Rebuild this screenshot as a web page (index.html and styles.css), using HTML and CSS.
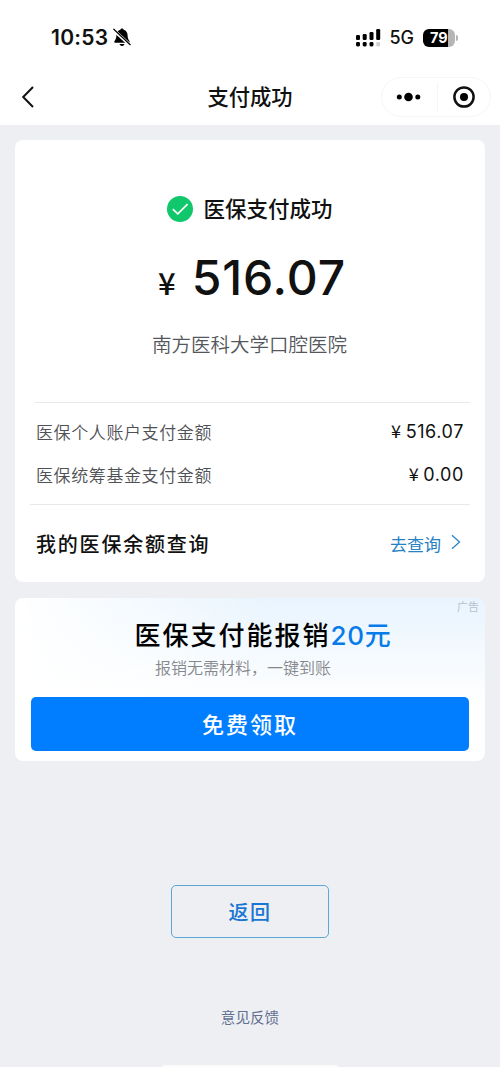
FILE: index.html
```html
<!DOCTYPE html>
<html lang="zh-CN">
<head>
<meta charset="utf-8">
<title>支付成功</title>
<link rel="stylesheet" href="styles.css">
</head>
<body>
<div class="screen">
  <header class="status">
    <div class="clock"><span class="time">10:53</span>
      <svg width="18" height="19" viewBox="0 0 18 19"><path d="M9 .6c1 0 1.5.6 1.6 1.2 2.8.8 4 3 4 5.6 0 3.8 2.2 5.200 2.200 6.700 0 .5-.4.7-1 .7H2.200c-.6 0-1-.2-1-.7 0-1.500 2.200-2.900 2.200-6.700 0-2.600 1.200-4.800 4-5.600C7.500 1.200 8 .6 9 .6z"/><path d="M6.500 16h5c-.3 1.200-1.300 1.900-2.500 1.900S6.800 17.200 6.500 16z"/><path d="M0 1.500l17 15.500" stroke="#fff" stroke-width="3.200"/><path d="M.8 1.200l16.400 15.500" stroke="#000" stroke-width="1.200" stroke-linecap="round"/></svg>
    </div>
    <div class="signals">
      <svg class="bars" width="26" height="18" viewBox="0 0 26 18"><rect x="1" y="6" width="4" height="5" rx="1.300"/><rect x="7.700" y="5" width="4" height="6" rx="1.300"/><rect x="14.500" y="3" width="4" height="8" rx="1.300"/><rect x="21.200" y="0" width="4" height="11" rx="1.300"/><rect x="1" y="13" width="4" height="4.500" rx="1.400"/><rect x="7.700" y="13" width="4" height="4.500" rx="1.400"/><rect x="14.500" y="13" width="4" height="4.500" rx="1.400"/><rect x="21.200" y="13" width="4" height="4.500" rx="1.400" fill="#d2d2d2"/></svg>
      <span class="network">5G</span>
      <span class="battery">79</span><span class="battery-tip"></span>
    </div>
  </header>
  <nav class="nav">
    <svg class="back" width="14" height="24" viewBox="0 0 14 24"><path d="M12 2L2.200 12 12 22" fill="none" stroke="#111" stroke-width="2"/></svg>
    <h1 class="nav-title">支付成功</h1>
    <div class="capsule">
      <svg width="26" height="12" viewBox="0 0 26 12"><circle cx="3.300" cy="6" r="2.500"/><circle cx="12.500" cy="6" r="4.300"/><circle cx="21.800" cy="6" r="2.500"/></svg>
      <i class="capsule-line"></i>
      <svg width="24" height="24" viewBox="0 0 24 24"><circle cx="12" cy="12" r="9.600" fill="none" stroke="#111" stroke-width="2.500"/><circle cx="12" cy="12" r="4"/></svg>
    </div>
  </nav>
  <main class="content">
    <section class="card receipt">
      <div class="result"><svg width="26" height="26" viewBox="0 0 26 26"><circle cx="13" cy="13" r="13" fill="#10c76b"/><path d="M5.800 13.200l5 4.700 9.800-9.800" fill="none" stroke="#fff" stroke-width="1.700"/></svg><span>医保支付成功</span></div>
      <div class="amount"><span class="yen">¥</span><span class="sum">516.07</span></div>
      <div class="hospital">南方医科大学口腔医院</div>
      <div class="details">
        <div class="row"><span>医保个人账户支付金额</span><span class="value"><small>¥</small>516.07</span></div>
        <div class="row"><span>医保统筹基金支付金额</span><span class="value"><small>¥</small>0.00</span></div>
      </div>
      <div class="balance">
        <span class="balance-title">我的医保余额查询</span>
        <a class="query">去查询<svg width="10" height="16" viewBox="0 0 10 16"><path d="M1 1.200L8.500 8 1 14.800" fill="none" stroke="#3189c6" stroke-width="1.400"/></svg></a>
      </div>
    </section>
    <section class="card ad">
      <span class="ad-tag">广告</span>
      <h2 class="ad-title">医保支付能报销<b>20元</b></h2>
      <p class="ad-text">报销无需材料，一键到账</p>
      <button class="claim">免费领取</button>
    </section>
    <button class="return">返回</button>
    <a class="feedback">意见反馈</a>
    <div class="home-bar"></div>
  </main>
</div>
</body>
</html>
```
FILE: styles.css
```css
* { box-sizing: border-box; }
body { margin: 0; background: #fff; color: #111; font-family: Inter, "Noto Sans CJK SC", sans-serif; }
svg { display: block; flex: none; }
h1, h2, p { margin: 0; font-weight: 500; }
button { font-family: inherit; display: block; padding: 0; }
.screen { width: 500px; height: 1067px; display: flex; flex-direction: column; }
.status { height: 70px; padding: 5px 42px 0 51px; display: flex; align-items: center; justify-content: space-between; }
.clock, .signals { display: flex; align-items: center; }
.clock { gap: 4px; }
.time { font-size: 21px; font-weight: 600; line-height: 26px; letter-spacing: .3px; }
.network { margin-left: 8px; font-size: 18px; font-weight: 500; line-height: 22px; }
.battery { margin-left: 9px; width: 32px; height: 18px; padding-left: 7px; border-radius: 6px; background: linear-gradient(90deg, #000 79%, #b5b5b5 79%); color: #fff; font-size: 14.500px; font-weight: 700; line-height: 18px; }
.battery-tip { width: 2px; height: 6px; margin-left: 1px; border-radius: 0 2px 2px 0; background: #b5b5b5; }
.nav { height: 55px; padding: 0 9px 2px 21px; display: grid; grid-template-columns: 110px 1fr 110px; align-items: center; }
.nav-title { text-align: center; margin-left: -12px; font-size: 21.300px; line-height: 30px; }
.capsule { width: 110px; height: 40px; border: 1px solid #f6f6f6; border-radius: 20px; display: flex; align-items: center; padding: 0 14px; justify-content: space-between; }
.capsule-line { width: 1px; height: 30px; background: #f5f5f5; }
.content { height: 942px; padding: 15px 15px 0; background: #eeeff3; display: flex; flex-direction: column; align-items: center; }
.card { width: 470px; flex: none; border-radius: 8px; background: #fff; }
.receipt { height: 442px; padding: 53px 15px 0; }
.result { height: 32px; display: flex; align-items: center; justify-content: center; gap: 10px; font-size: 21.500px; font-weight: 500; }
.result span { margin-top: -3px; }
.amount { height: 60px; margin-top: 23px; padding-left: 4px; display: flex; justify-content: center; align-items: baseline; gap: 16px; line-height: 60px; font-weight: 500; }
.yen { font-family: "Noto Sans CJK SC", sans-serif; font-size: 31px; }
.sum { font-size: 48px; letter-spacing: .9px; }
.hospital { margin-top: 22px; margin-left: -1px; text-align: center; color: #55575c; font-size: 19.500px; font-weight: 350; line-height: 30px; }
.details { margin: 42px 0 0 5px; height: 102px; padding: 7px 6px 0 1px; border-top: 1px solid #e8e8ea; }
.row { height: 43px; display: flex; align-items: center; justify-content: space-between; color: #505155; font-size: 17px; font-weight: 350; letter-spacing: .6px; }
.value { color: #111; font-size: 18px; font-weight: 400; letter-spacing: .6px; }
.value small { margin-right: 4px; font-family: "Noto Sans CJK SC", sans-serif; font-size: 18px; line-height: 1; }
.balance { height: 78px; padding: 0 8px 0 6px; border-top: 1px solid #e8e8ea; display: flex; align-items: center; justify-content: space-between; }
.balance-title { font-size: 20px; font-weight: 500; letter-spacing: 1.800px; }
.query { display: flex; align-items: center; gap: 10px; padding-right: 1px; color: #2580c4; font-size: 17px; }
.query svg { margin-top: -3px; }
.ad { position: relative; height: 163px; margin-top: 16px; padding: 20px 16px 11px; background: linear-gradient(90deg, #fff 0, transparent 55%), linear-gradient(180deg, #e8f4fe 0, #fff 65%); }
.ad-tag { position: absolute; top: 1px; right: 6px; color: #b8c1ca; font-size: 11px; line-height: 17px; }
.ad-title { height: 36px; padding-left: 26px; text-align: center; color: #000; font-size: 26px; letter-spacing: 2px; line-height: 36px; }
.ad-title b { color: #087be9; font-weight: 500; letter-spacing: .8px; }
.ad-text { height: 26px; margin-top: 1px; padding-right: 14px; text-align: center; color: #85878b; font-size: 16px; font-weight: 350; line-height: 26px; }
.claim { width: 438px; height: 54px; margin-top: 16px; padding-bottom: 3px; border: 0; border-radius: 5px; background: #007eff; color: #fff; font-size: 22px; font-weight: 500; letter-spacing: 2px; }
.return { flex: none; width: 158px; height: 53px; margin: 124px auto 0; padding-bottom: 1px; border: 1px solid #5da6d5; border-radius: 5px; background: transparent; color: #1976d2; font-size: 20px; font-weight: 500; letter-spacing: 1.500px; }
.feedback { margin-top: 70px; text-align: center; color: #626f91; font-size: 14.600px; line-height: 20px; }
.home-bar { width: 175px; height: 2px; margin-top: auto; background: #fafafb; }
```
